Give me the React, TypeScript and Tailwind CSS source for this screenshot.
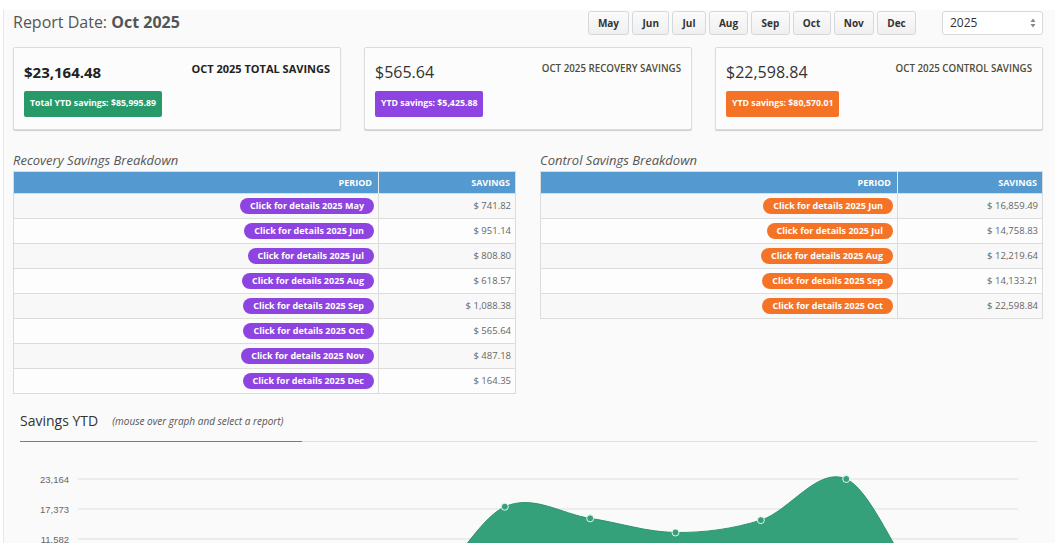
import React from 'react'

const months = ['May', 'Jun', 'Jul', 'Aug', 'Sep', 'Oct', 'Nov', 'Dec']

const recovery = [
  ['May', '741.82'],
  ['Jun', '951.14'],
  ['Jul', '808.80'],
  ['Aug', '618.57'],
  ['Sep', '1,088.38'],
  ['Oct', '565.64'],
  ['Nov', '487.18'],
  ['Dec', '164.35'],
]

const control = [
  ['Jun', '16,859.49'],
  ['Jul', '14,758.83'],
  ['Aug', '12,219.64'],
  ['Sep', '14,133.21'],
  ['Oct', '22,598.84'],
]

// monthly totals Jan..Dec
const totals = [0, 0, 0, 0, 741.82, 17810.63, 15567.63, 12838.21, 15221.59, 23164.48, 487.18, 164.35]

const font = { fontFamily: '"Open Sans", "Liberation Sans", sans-serif' }

function Card({ amount, title, badge, badgeClass, bold }: { amount: string; title: string; badge: string; badgeClass: string; bold?: boolean }) {
  return (
    <div className="flex-1 rounded-[2px] border border-[#dcdcdc] bg-[#fcfcfc] pt-[12px] pb-[12px] pl-[10px] pr-[10px] shadow-[0_1px_1px_rgba(0,0,0,0.18)]">
      <div className="flex items-start justify-between">
        <div className={bold ? 'text-[15px] leading-[24px] font-bold text-[#222]' : 'text-[16px] leading-[24px] text-[#333]'}>{amount}</div>
        <div className={bold ? 'mt-[1px] text-[11px] leading-[16px] font-bold text-[#222]' : 'mt-[1px] text-[9.75px] leading-[16px] font-semibold text-[#4d4b36]'}>{title}</div>
      </div>
      <div className={`mt-[7px] inline-flex h-[26px] items-center rounded-[2px] px-[6px] text-[8.75px] font-bold text-white ${badgeClass}`}>{badge}</div>
    </div>
  )
}

function Breakdown({ title, rows, pillClass, periodWidth }: { title: string; rows: string[][]; pillClass: string; periodWidth: string }) {
  return (
    <div className="flex-1">
      <div className="mb-[2px] text-[13px] leading-[18px] italic text-[#555]">{title}</div>
      <table className="w-full border-collapse border border-[#dcdcdc] text-[9px]">
        <thead>
          <tr className="h-[22px] bg-[#5499cf] text-white">
            <th className={`${periodWidth} border-r border-[#e8e8e8] pr-[6px] text-right font-bold`}>PERIOD</th>
            <th className="pr-[5px] text-right font-bold">SAVINGS</th>
          </tr>
        </thead>
        <tbody>
          {rows.map(([m, v], i) => (
            <tr key={m} className={`h-[25px] border-t border-[#dcdcdc] ${i % 2 === 0 ? 'bg-[#f8f8f8]' : 'bg-[#fdfdfd]'}`}>
              <td className="border-r border-[#dcdcdc] pr-[4px] text-right">
                <span className={`inline-flex h-[16px] items-center rounded-full px-[10px] text-[9px] font-bold text-white ${pillClass}`}>
                  Click for details 2025 {m}
                </span>
              </td>
              <td className="pr-[4px] text-right text-[9.5px] text-[#666]">$ {v}</td>
            </tr>
          ))}
        </tbody>
      </table>
    </div>
  )
}

function Chart() {
  const x0 = 58
  const step = 85.36
  const yFor = (v: number) => 157 - (v / 5791.12) * 30
  const pts = totals.map((v, i) => [x0 + i * step, yFor(v)])
  let d = `M ${pts[0][0]} ${pts[0][1]}`
  for (let i = 0; i < pts.length - 1; i++) {
    const p0 = pts[Math.max(i - 1, 0)]
    const p1 = pts[i]
    const p2 = pts[i + 1]
    const p3 = pts[Math.min(i + 2, pts.length - 1)]
    const c1 = [p1[0] + (p2[0] - p0[0]) / 6, p1[1] + (p2[1] - p0[1]) / 6]
    const c2 = [p2[0] - (p3[0] - p1[0]) / 6, p2[1] - (p3[1] - p1[1]) / 6]
    d += ` C ${c1[0]} ${c1[1]} ${c2[0]} ${c2[1]} ${p2[0]} ${p2[1]}`
  }
  const area = `${d} L ${pts[pts.length - 1][0]} 157 L ${pts[0][0]} 157 Z`
  const grid = [23164, 17373, 11582, 5791, 0]
  const labels = ['Jan', 'Feb', 'Mar', 'Apr', 'May', 'Jun', 'Jul', 'Aug', 'Sep', 'Oct', 'Nov', 'Dec']
  return (
    <svg width="1017" height="190" viewBox="0 0 1017 190" className="block" style={{ fontFamily: '"Liberation Sans", Arial, sans-serif' }}>
      {grid.map((g, i) => (
        <g key={g}>
          <line x1="58" x2="998" y1={37 + i * 30} y2={37 + i * 30} stroke="#dedede" strokeWidth="1" />
          <text x="49" y={40.5 + i * 30} textAnchor="end" fontSize="9.5" fill="#666">
            {g.toLocaleString('en-US')}
          </text>
        </g>
      ))}
      <path d={area} fill="#34a17a" />
      <path d={d} fill="none" stroke="#2f9470" strokeWidth="1" />
      {pts.map(([x, y], i) => (
        <circle key={i} cx={x} cy={y} r="3.5" fill="#34a17a" stroke="#e8f5ef" strokeWidth="1" />
      ))}
      {labels.map((l, i) => (
        <text key={l} x={x0 + i * step} y="175" textAnchor="middle" fontSize="10" fill="#666">
          {l}
        </text>
      ))}
    </svg>
  )
}

export default function App() {
  return (
    <div className="min-h-screen bg-white pt-[10px] pl-[3px]" style={font}>
      <div className="min-h-screen border-l border-[#e4e8ec] bg-[#fafafa] pl-[9px] pr-[12px]">
        <div className="flex items-start pt-[1px]">
          <div className="mt-[-1px] text-[16px] leading-[24px] text-[#555]">
            Report Date: <span className="font-bold">Oct 2025</span>
          </div>
          <div className="ml-auto flex gap-[3px]">
            {months.map((m) => (
              <div key={m} className="flex h-[24px] items-center rounded-[3px] border border-[#d6d9dc] bg-gradient-to-b from-[#fbfbfb] to-[#f0f0f0] px-[9.25px] text-[10px] font-bold text-[#333]">
                {m}
              </div>
            ))}
          </div>
          <div className="ml-[26px] flex h-[24px] w-[101px] items-center justify-between rounded-[3px] border border-[#d6d9dc] bg-white pl-[7px] pr-[6px] text-[12px] text-[#333]">
            <span>2025</span>
            <svg width="6" height="10" viewBox="0 0 6 10">
              <path d="M3 0.5 L5.5 4 L0.5 4 Z" fill="#888" />
              <path d="M3 9.5 L5.5 6 L0.5 6 Z" fill="#888" />
            </svg>
          </div>
        </div>

        <div className="mt-[12px] flex gap-[23px]">
          <Card bold amount="$23,164.48" title="OCT 2025 TOTAL SAVINGS" badge="Total YTD savings: $85,995.89" badgeClass="bg-[#289a6a]" />
          <Card amount="$565.64" title="OCT 2025 RECOVERY SAVINGS" badge="YTD savings: $5,425.88" badgeClass="bg-[#8e44e0]" />
          <Card amount="$22,598.84" title="OCT 2025 CONTROL SAVINGS" badge="YTD savings: $80,570.01" badgeClass="bg-[#f47326]" />
        </div>

        <div className="mt-[21px] flex items-start gap-[24px]">
          <Breakdown title="Recovery Savings Breakdown" rows={recovery} pillClass="bg-[#8e44e0]" periodWidth="w-[365px]" />
          <Breakdown title="Control Savings Breakdown" rows={control} pillClass="bg-[#f47326]" periodWidth="w-[357px]" />
        </div>

        <div className="mt-[15px] ml-[7px] mr-[6px]">
          <div className="flex border-b border-[#e0e0e0]">
            <div className="flex w-[282px] items-center gap-[14px] border-b border-[#6b7f95] pb-[10px] mb-[-1px] pt-[2px]">
              <span className="text-[14px] leading-[20px] text-[#333]">Savings YTD</span>
              <span className="text-[10px] italic text-[#555]">(mouse over graph and select a report)</span>
            </div>
          </div>
          <Chart />
        </div>
      </div>
    </div>
  )
}
